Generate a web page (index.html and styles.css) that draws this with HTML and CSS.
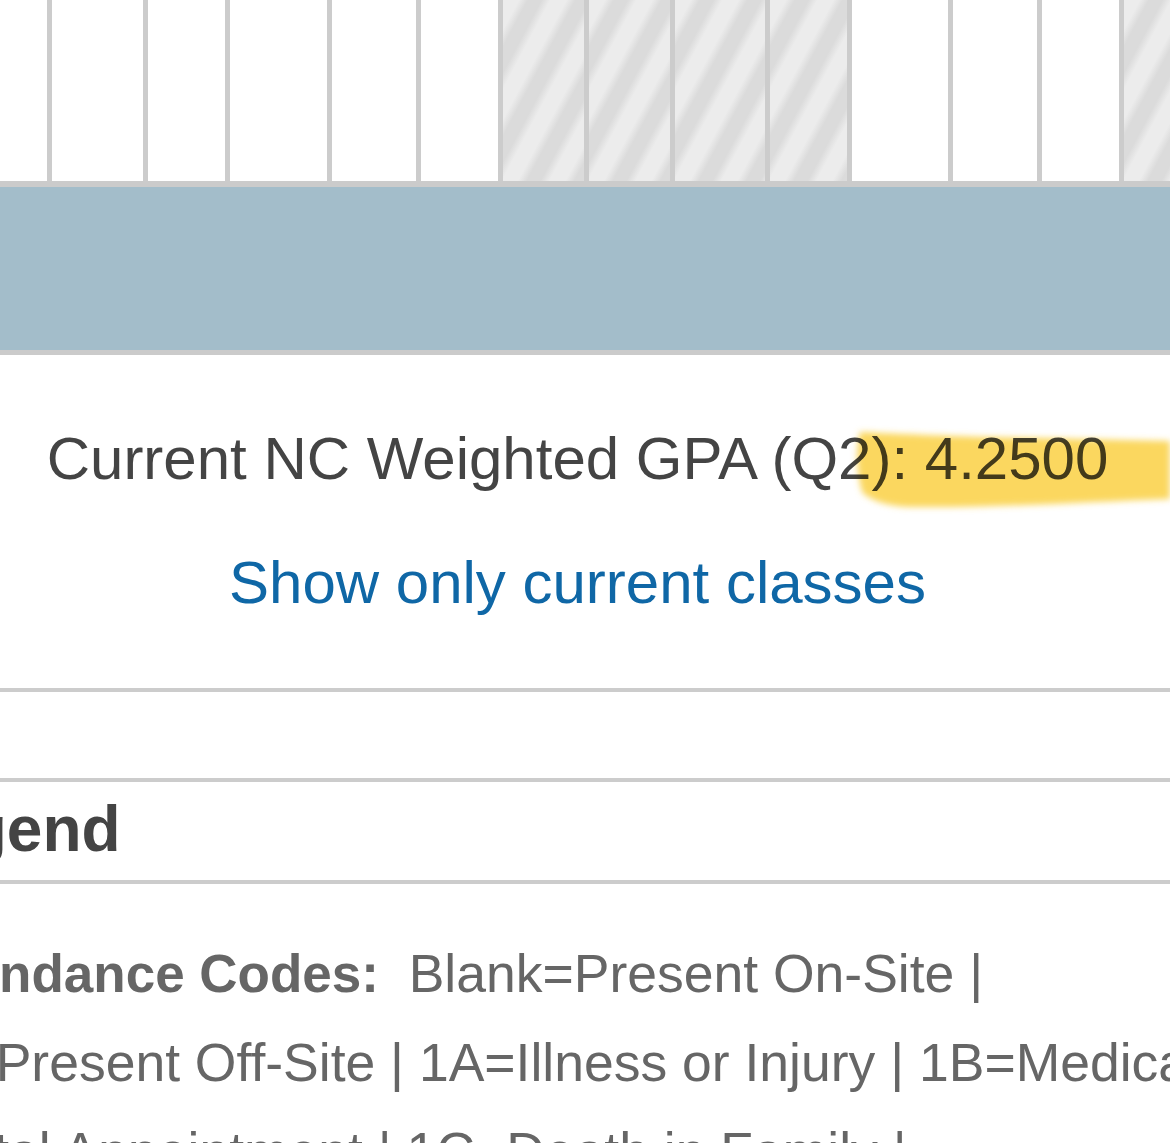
FILE: index.html
```html
<!DOCTYPE html>
<html lang="en">
<head>
<meta charset="utf-8">
<title>Grades and Attendance</title>
<link rel="stylesheet" href="styles.css">
</head>
<body>
<div class="page">
  <div class="days">
    <div class="day first"></div>
    <div class="day"></div>
    <div class="day"></div>
    <div class="day"></div>
    <div class="day"></div>
    <div class="day"></div>
    <div class="day off"></div>
    <div class="day off"></div>
    <div class="day off"></div>
    <div class="day off"></div>
    <div class="day"></div>
    <div class="day"></div>
    <div class="day"></div>
    <div class="day off"></div>
  </div>
  <div class="foot"></div>
  <div class="gpa">
    <p class="gpa-line">Current NC Weighted GPA (Q2): 4.2500</p>
    <a class="gpa-link" href="#">Show only current classes</a>
    <svg class="marker" width="330" height="100" viewBox="0 0 330 100" aria-hidden="true">
      <defs>
        <filter id="soft" x="-10%" y="-20%" width="120%" height="140%">
          <feGaussianBlur stdDeviation="3"/>
        </filter>
      </defs>
      <path filter="url(#soft)" fill="#fad24a" fill-opacity="0.88"
        d="M20 12 C60 14 120 17 200 18 L330 21 L330 79 C250 82 150 88 70 87 C45 86 30 80 22 72 C16 50 16 30 20 12 Z"/>
    </svg>
  </div>
  <div class="spacer"></div>
  <h2 class="legend-title">Legend</h2>
  <div class="legend">
    <p class="codes"><b class="codes-label">Attendance Codes:</b>&nbsp; Blank=Present On-Site |<br>RL=Present Off-Site | 1A=Illness or Injury | 1B=Medical or<br>Dental Appointment | 1C=Death in Family |</p>
  </div>
</div>
</body>
</html>
```

FILE: styles.css
```css
* {
  box-sizing: border-box;
}

html,
body {
  margin: 0;
  padding: 0;
  background: #ffffff;
  overflow: hidden;
}

body {
  width: 1170px;
  height: 1143px;
  font-family: "Liberation Sans", Arial, sans-serif;
}

.page {
  margin-left: -107px;
  width: 1369px;
}

.days {
  display: grid;
  grid-template-columns: 154px 96px 82px 102px 89px 82px 86px 86px 95px 82px 101px 89px 82px 1fr;
  height: 187px;
  border-bottom: 6px solid #cbcbcb;
}

.day {
  border-left: 5px solid #cccccc;
  background: #ffffff;
}

.day.first {
  border-left: 0;
}

.day.off {
  background: repeating-linear-gradient(118deg,
    #ececec 0px, #ececec 14px,
    #dbdbdb 22px, #dbdbdb 34px,
    #ececec 42px);
}

.foot {
  height: 168px;
  background: #a3bdca;
  border-bottom: 5px solid #cbcbcb;
}

.gpa {
  position: relative;
  text-align: center;
  padding: 69px 0 70px;
  border-bottom: 4px solid #cccccc;
}

.gpa-line {
  margin: 0;
  font-size: 60px;
  line-height: 70px;
  color: #444444;
}

.gpa-link {
  display: block;
  margin-top: 54px;
  font-size: 60px;
  line-height: 70px;
  color: #0f67a6;
  text-decoration: none;
}

.marker {
  position: absolute;
  left: 947px;
  top: 65px;
  mix-blend-mode: multiply;
  pointer-events: none;
}

.spacer {
  height: 90px;
  border-bottom: 4px solid #cccccc;
}

.legend-title {
  margin: 0;
  font-size: 64px;
  font-weight: bold;
  line-height: 94px;
  padding-bottom: 4px;
  color: #444444;
  border-bottom: 4px solid #cccccc;
}

.legend {
  padding-top: 45px;
  padding-left: 3px;
  font-size: 53.5px;
  line-height: 89px;
  color: #666666;
  white-space: nowrap;
}

.codes {
  margin: 0;
}

.codes-label {
  font-size: 53px;
}
```
